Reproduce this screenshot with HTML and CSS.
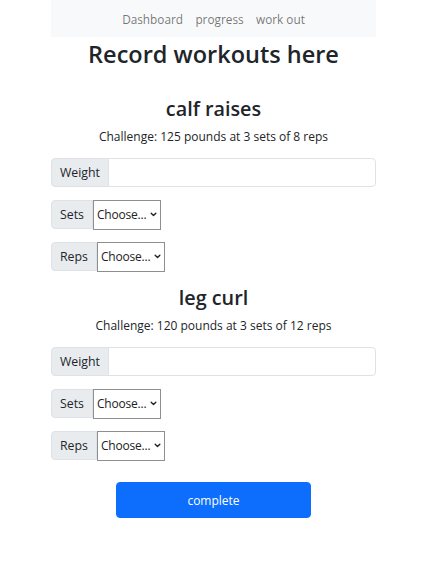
FILE: index.html
```html
<!DOCTYPE html>
<html lang="en">
<head>
<meta charset="utf-8">
<title>Record workouts</title>
<link rel="stylesheet" href="styles.css">
</head>
<body>
<div class="page">
  <nav class="navbar">
    <a class="nav-link" href="#">Dashboard</a>
    <a class="nav-link" href="#">progress</a>
    <a class="nav-link" href="#">work out</a>
  </nav>
  <h1 class="title">Record workouts here</h1>

  <section class="exercise">
    <h2 class="ex-name">calf raises</h2>
    <p class="challenge">Challenge: 125 pounds at 3 sets of 8 reps</p>
    <div class="input-group">
      <span class="group-text">Weight</span>
      <input class="text-input" type="text">
    </div>
    <div class="input-group">
      <span class="group-text">Sets</span>
      <select class="picker"><option>Choose...</option></select>
    </div>
    <div class="input-group">
      <span class="group-text">Reps</span>
      <select class="picker"><option>Choose...</option></select>
    </div>
  </section>

  <section class="exercise">
    <h2 class="ex-name">leg curl</h2>
    <p class="challenge">Challenge: 120 pounds at 3 sets of 12 reps</p>
    <div class="input-group">
      <span class="group-text">Weight</span>
      <input class="text-input" type="text">
    </div>
    <div class="input-group">
      <span class="group-text">Sets</span>
      <select class="picker"><option>Choose...</option></select>
    </div>
    <div class="input-group">
      <span class="group-text">Reps</span>
      <select class="picker"><option>Choose...</option></select>
    </div>
  </section>

  <div class="actions">
    <button class="btn-primary" type="button">complete</button>
  </div>
</div>
</body>
</html>
```

FILE: styles.css
```css
* { box-sizing: border-box; }
html, body { margin: 0; padding: 0; background: #fff; }
body {
  font-family: "Open Sans", "Noto Sans", sans-serif;
  color: #212529;
  font-size: 12.5px;
}
.page {
  width: 325px;
  margin: 0 auto;
}
.navbar {
  height: 37px;
  background: #f8f9fa;
  display: flex;
  justify-content: center;
  align-items: center;
}
.nav-link {
  color: rgba(0,0,0,0.55);
  text-decoration: none;
  font-size: 11.8px;
  line-height: 16px;
  padding: 0 6.2px;
}
.title {
  margin: 1px 0 0;
  text-align: center;
  font-size: 23.5px;
  line-height: 32px;
  font-weight: 600;
  color: #212529;
}
.exercise { margin: 0; }
.ex-name {
  margin: 25px 0 0;
  text-align: center;
  font-size: 19.8px;
  line-height: 28px;
  font-weight: 600;
}
.exercise + .exercise .ex-name { margin-top: 13px; }
.challenge {
  margin: 5px 0 12px;
  text-align: center;
  font-size: 12px;
  line-height: 18px;
}
.input-group {
  display: flex;
  align-items: stretch;
  height: 29px;
  margin-bottom: 13px;
}
.group-text {
  display: flex;
  align-items: center;
  padding: 0 8px;
  background: #e9ecef;
  border: 1px solid #dee2e6;
  border-radius: 4px 0 0 4px;
  font-size: 12.3px;
  color: #212529;
}
.text-input {
  flex: 1;
  margin-left: -1px;
  border: 1px solid #dee2e6;
  border-radius: 0 4px 4px 0;
  background: #fff;
  font: inherit;
  outline: none;
}
.picker {
  -webkit-appearance: none;
  appearance: none;
  width: 68px;
  height: 30px;
  margin-top: -0.5px;
  border: 1px solid #8f8f8f;
  border-radius: 0;
  background-color: #fff;
  background-image: url("data:image/svg+xml,%3csvg xmlns='http://www.w3.org/2000/svg' viewBox='0 0 8 6'%3e%3cpath fill='none' stroke='%23222' stroke-width='1.6' stroke-linecap='round' stroke-linejoin='round' d='M1.2 1.5 4 4.3 6.8 1.5'/%3e%3c/svg%3e");
  background-repeat: no-repeat;
  background-position: right 3px center;
  background-size: 7px 5px;
  padding: 0 0 0 3px;
  font-family: inherit;
  font-size: 12px;
  letter-spacing: -0.2px;
  color: #222;
}
.actions {
  display: flex;
  justify-content: center;
  margin-top: 22px;
}
.btn-primary {
  width: 195px;
  height: 36px;
  background: #0d6efd;
  color: #fff;
  border: 1px solid #0d6efd;
  border-radius: 4px;
  font-family: inherit;
  font-size: 12px;
}
```
